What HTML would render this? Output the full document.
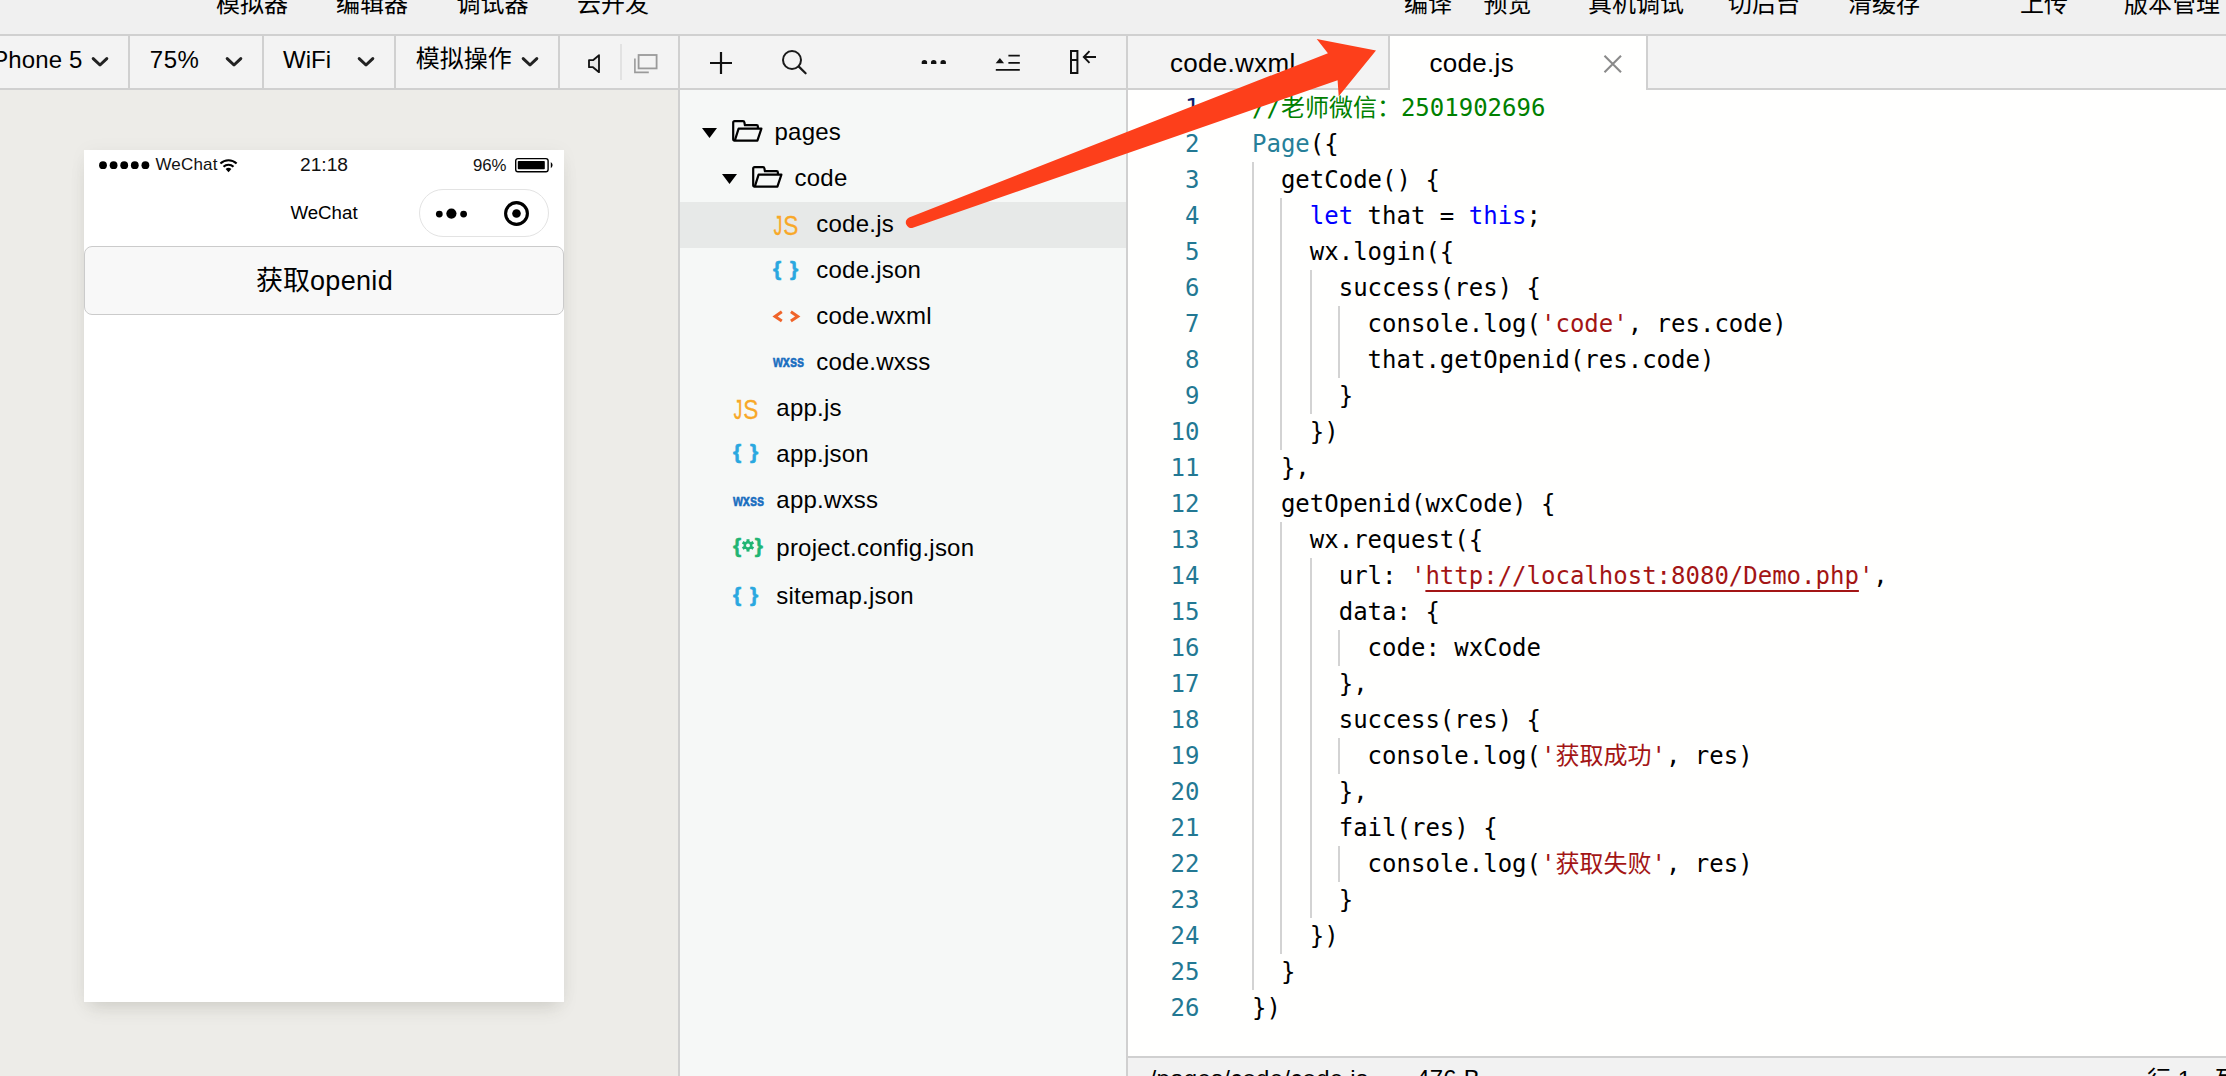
<!DOCTYPE html>
<html lang="zh-CN">
<head>
<meta charset="utf-8">
<title>code.js</title>
<style>
html,body{margin:0;padding:0;}
body{width:2226px;height:1076px;overflow:hidden;position:relative;background:#f0f0f0;font-family:'Liberation Sans', 'Noto Sans CJK SC', sans-serif;}
.a{position:absolute;}
.t{position:absolute;white-space:pre;}
svg{position:absolute;overflow:visible;}
</style>
</head>
<body>

<div class="a" style="left:0;top:0;width:2226px;height:34px;background:#f0f0f0"></div>
<div class="a" style="left:0;top:34px;width:2226px;height:2px;background:#d0d0d0"></div>
<div class="a" style="left:0;top:36px;width:2226px;height:52px;background:#f3f3f3"></div>
<div class="a" style="left:0;top:88px;width:2226px;height:2px;background:#d0d0d0"></div>
<div class="a" style="left:0;top:90px;width:678px;height:986px;background:#edece8"></div>
<div class="a" style="left:680px;top:90px;width:446px;height:986px;background:#f6f8f7"></div>
<div class="a" style="left:1128px;top:90px;width:1098px;height:966px;background:#fffffe"></div>
<div class="a" style="left:1390px;top:36px;width:256px;height:54px;background:#fffffe"></div>
<div class="a" style="left:678px;top:36px;width:2px;height:1040px;background:#d0d0d0"></div>
<div class="a" style="left:1126px;top:36px;width:2px;height:1040px;background:#d0d0d0"></div>
<div class="a" style="left:1388px;top:36px;width:2px;height:54px;background:#d0d0d0"></div>
<div class="a" style="left:1646px;top:36px;width:2px;height:54px;background:#d0d0d0"></div>
<div class="a" style="left:128px;top:36px;width:2px;height:52px;background:#d0d0d0"></div>
<div class="a" style="left:262px;top:36px;width:2px;height:52px;background:#d0d0d0"></div>
<div class="a" style="left:394px;top:36px;width:2px;height:52px;background:#d0d0d0"></div>
<div class="a" style="left:558px;top:36px;width:2px;height:52px;background:#d0d0d0"></div>
<div class="a" style="left:620px;top:44px;width:2px;height:36px;background:#e2e2e2"></div>
<div class="a" style="left:1128px;top:1056px;width:1098px;height:2px;background:#d0d0d0"></div>
<div class="a" style="left:1128px;top:1058px;width:1098px;height:18px;background:#f2f2f2"></div>
<div class="t " style="top:-14.28px;font:24px/36px 'Liberation Sans', 'Noto Sans CJK SC', sans-serif;color:#000;height:36px;left:216px;">模拟器</div>
<div class="t " style="top:-14.28px;font:24px/36px 'Liberation Sans', 'Noto Sans CJK SC', sans-serif;color:#000;height:36px;left:336px;">编辑器</div>
<div class="t " style="top:-14.28px;font:24px/36px 'Liberation Sans', 'Noto Sans CJK SC', sans-serif;color:#000;height:36px;left:456.5px;">调试器</div>
<div class="t " style="top:-14.28px;font:24px/36px 'Liberation Sans', 'Noto Sans CJK SC', sans-serif;color:#000;height:36px;left:577px;">云开发</div>
<div class="t " style="top:-14.28px;font:24px/36px 'Liberation Sans', 'Noto Sans CJK SC', sans-serif;color:#000;height:36px;left:1404px;">编译</div>
<div class="t " style="top:-14.28px;font:24px/36px 'Liberation Sans', 'Noto Sans CJK SC', sans-serif;color:#000;height:36px;left:1483.5px;">预览</div>
<div class="t " style="top:-14.28px;font:24px/36px 'Liberation Sans', 'Noto Sans CJK SC', sans-serif;color:#000;height:36px;left:1588px;">真机调试</div>
<div class="t " style="top:-14.28px;font:24px/36px 'Liberation Sans', 'Noto Sans CJK SC', sans-serif;color:#000;height:36px;left:1728px;">切后台</div>
<div class="t " style="top:-14.28px;font:24px/36px 'Liberation Sans', 'Noto Sans CJK SC', sans-serif;color:#000;height:36px;left:1848px;">清缓存</div>
<div class="t " style="top:-14.28px;font:24px/36px 'Liberation Sans', 'Noto Sans CJK SC', sans-serif;color:#000;height:36px;left:2020px;">上传</div>
<div class="t " style="top:-14.28px;font:24px/36px 'Liberation Sans', 'Noto Sans CJK SC', sans-serif;color:#000;height:36px;left:2124px;">版本管理</div>
<div class="t " style="top:41.72px;font:24px/36px 'Liberation Sans', 'Noto Sans CJK SC', sans-serif;color:#000;height:36px;letter-spacing:0.1px;left:-13.2px;">iPhone 5</div>
<div class="t " style="top:41.72px;font:24px/36px 'Liberation Sans', 'Noto Sans CJK SC', sans-serif;color:#000;height:36px;letter-spacing:0.5px;left:149.8px;">75%</div>
<div class="t " style="top:41.72px;font:24px/36px 'Liberation Sans', 'Noto Sans CJK SC', sans-serif;color:#000;height:36px;left:283px;">WiFi</div>
<div class="t " style="top:40.72px;font:24px/36px 'Liberation Sans', 'Noto Sans CJK SC', sans-serif;color:#000;height:36px;left:415.7px;">模拟操作</div>
<svg style="left:90px;top:54.5px" width="20" height="14" viewBox="0 0 20 14"><path d="M3.2 3.6 L10 10 L16.8 3.6" fill="none" stroke="#222" stroke-width="3" stroke-linecap="round" stroke-linejoin="round"/></svg>
<svg style="left:224px;top:54.5px" width="20" height="14" viewBox="0 0 20 14"><path d="M3.2 3.6 L10 10 L16.8 3.6" fill="none" stroke="#222" stroke-width="3" stroke-linecap="round" stroke-linejoin="round"/></svg>
<svg style="left:356px;top:54.5px" width="20" height="14" viewBox="0 0 20 14"><path d="M3.2 3.6 L10 10 L16.8 3.6" fill="none" stroke="#222" stroke-width="3" stroke-linecap="round" stroke-linejoin="round"/></svg>
<svg style="left:520px;top:54.5px" width="20" height="14" viewBox="0 0 20 14"><path d="M3.2 3.6 L10 10 L16.8 3.6" fill="none" stroke="#222" stroke-width="3" stroke-linecap="round" stroke-linejoin="round"/></svg>
<svg style="left:586px;top:52px" width="18" height="24" viewBox="0 0 18 24"><path d="M3 8.2 H7 L13 3.2 V20.2 L7 15.2 H3 Z" fill="#e9e9e9" stroke="#111" stroke-width="1.8" stroke-linejoin="round"/></svg>
<svg style="left:632px;top:52px" width="28" height="24" viewBox="0 0 28 24"><rect x="6.6" y="3" width="18" height="13.4" fill="none" stroke="#9a9a9a" stroke-width="1.8"/><path d="M2.9 6.5 V20.4 H16.8" fill="none" stroke="#9a9a9a" stroke-width="1.6"/></svg>
<svg style="left:708px;top:50px" width="26" height="26" viewBox="0 0 26 26"><path d="M13 2 V24 M2 13 H24" stroke="#111" stroke-width="2.2" fill="none"/></svg>
<svg style="left:780px;top:48px" width="30" height="30" viewBox="0 0 30 30"><circle cx="12" cy="12" r="9" fill="none" stroke="#1a1a1a" stroke-width="2"/><path d="M18.6 18.4 L25.6 25.3" stroke="#1a1a1a" stroke-width="2.2" fill="none" stroke-linecap="round"/></svg>
<svg style="left:920px;top:56px;overflow:hidden" width="28" height="8" viewBox="0 0 28 8"><circle cx="4.4" cy="6.7" r="2.75" fill="#111"/><circle cx="13.7" cy="6.7" r="2.75" fill="#111"/><circle cx="23.2" cy="6.7" r="2.75" fill="#111"/></svg>
<svg style="left:994px;top:52px" width="28" height="24" viewBox="0 0 28 24"><path d="M1.7 11.3 L5.9 5.9 L10.1 11.3 Z" fill="#111"/><path d="M14.4 3.6 H25.8 M14.4 10.85 H25.8 M1.8 17.9 H25.8" stroke="#111" stroke-width="1.9" fill="none"/></svg>
<svg style="left:1068px;top:48px" width="32" height="28" viewBox="0 0 32 28"><rect x="3" y="3" width="6.4" height="22" fill="none" stroke="#111" stroke-width="2"/><path d="M3 12 H9.4" stroke="#111" stroke-width="2"/><path d="M16 9 H28 M21.5 3.2 L15.8 9 L21.5 14.8" fill="none" stroke="#111" stroke-width="1.9"/></svg>
<div class="t " style="top:43.53px;font:26px/39px 'Liberation Sans', 'Noto Sans CJK SC', sans-serif;color:#000;height:39px;letter-spacing:0.3px;left:1170px;">code.wxml</div>
<div class="t " style="top:43.53px;font:26px/39px 'Liberation Sans', 'Noto Sans CJK SC', sans-serif;color:#000;height:39px;letter-spacing:0.3px;left:1429.5px;">code.js</div>
<svg style="left:1603px;top:54px" width="20" height="20" viewBox="0 0 20 20"><path d="M1.5 1.8 L18 18.2 M18 1.8 L1.5 18.2" stroke="#8a8a8a" stroke-width="2.1" fill="none"/></svg>
<div class="a" style="left:84px;top:150px;width:480px;height:852px;background:#fff;box-shadow:0 10px 18px -6px rgba(60,60,40,0.17),0 0 18px rgba(60,60,40,0.035)"></div>
<svg style="left:99.2px;top:160.5px" width="52" height="9" viewBox="0 0 52 9"><circle cx="4.0" cy="4.2" r="3.9" fill="#000"/><circle cx="14.6" cy="4.2" r="3.9" fill="#000"/><circle cx="25.2" cy="4.2" r="3.9" fill="#000"/><circle cx="35.8" cy="4.2" r="3.9" fill="#000"/><circle cx="46.4" cy="4.2" r="3.9" fill="#000"/></svg>
<div class="t " style="top:152.15px;font:17px/26px 'Liberation Sans', 'Noto Sans CJK SC', sans-serif;color:#111;height:26px;letter-spacing:0.2px;left:155.4px;">WeChat</div>
<svg style="left:219px;top:158px" width="19" height="15" viewBox="0 0 19 15"><path d="M1.4 5.6 A11.5 11.5 0 0 1 17.6 5.6" fill="none" stroke="#000" stroke-width="2.1" stroke-linecap="butt"/><path d="M4.5 8.8 A7.1 7.1 0 0 1 14.5 8.8" fill="none" stroke="#000" stroke-width="2.1"/><path d="M9.5 14.2 L6.6 11.1 A4.1 4.1 0 0 1 12.4 11.1 Z" fill="#000"/></svg>
<div class="t " style="top:149.89px;font:19.2px/29px 'Liberation Sans', 'Noto Sans CJK SC', sans-serif;color:#111;height:29px;left:-176px;width:1000px;text-align:center;">21:18</div>
<div class="t " style="top:152.72px;font:16.8px/25px 'Liberation Sans', 'Noto Sans CJK SC', sans-serif;color:#111;height:25px;left:-493.5px;width:1000px;text-align:right;">96%</div>
<svg style="left:514px;top:157px" width="42" height="17" viewBox="0 0 42 17"><rect x="1.7" y="1.6" width="32.4" height="13.2" rx="2.2" fill="none" stroke="#000" stroke-width="1.4"/><rect x="3.8" y="3.9" width="27" height="8.4" rx="0.8" fill="#000"/><path d="M36.8 5.1 Q40.4 8.2 36.8 11.3 Z" fill="#000"/></svg>
<div class="t " style="top:198.56px;font:18.7px/28px 'Liberation Sans', 'Noto Sans CJK SC', sans-serif;color:#000;height:28px;left:-176px;width:1000px;text-align:center;">WeChat</div>
<div class="a" style="left:419px;top:189px;width:129.6px;height:47.6px;box-sizing:border-box;border:1.5px solid #e3e3e3;border-radius:24px;background:#fff"></div>
<svg style="left:430px;top:200px" width="110" height="28" viewBox="0 0 110 28"><circle cx="9.3" cy="14.1" r="3.4" fill="#000"/><circle cx="21.4" cy="13.6" r="5.1" fill="#000"/><circle cx="33.6" cy="14.1" r="3.4" fill="#000"/><circle cx="86.5" cy="13.5" r="10.9" fill="none" stroke="#000" stroke-width="3.1"/><circle cx="86.5" cy="13.5" r="4.3" fill="#000"/></svg>
<div class="a" style="left:84px;top:246px;width:480px;height:69px;box-sizing:border-box;border:1.5px solid #cbcbcb;border-radius:8px;background:#f8f8f8"></div>
<div class="t " style="top:260.68px;font:27px/40px 'Liberation Sans', 'Noto Sans CJK SC', sans-serif;color:#000;height:40px;left:-175.5px;width:1000px;text-align:center;">获取<span style="letter-spacing:0.35px">openid</span></div>
<div class="a" style="left:680px;top:202px;width:446px;height:46px;background:#e7e9e8"></div>
<svg style="left:702.2px;top:127.8px" width="15" height="10" viewBox="0 0 15 10"><path d="M0 0 H15 L7.5 10 Z" fill="#000"/></svg>
<svg style="left:731.8px;top:119.6px" width="31" height="23" viewBox="0 0 31 23"><path d="M2.6 20.6 Q1.2 20.6 1.2 19.2 V2.6 Q1.2 1.2 2.6 1.2 H11 Q12.2 1.2 12.4 2.4 L12.9 5.2 H24.6 Q25.9 5.2 25.9 6.5 V8.4" fill="none" stroke="#000" stroke-width="2.2" stroke-linejoin="round"/><path d="M6.6 8.6 H29.4 L25.4 20.6 H2.8 Z" fill="none" stroke="#000" stroke-width="2.2" stroke-linejoin="round"/></svg>
<svg style="left:722.2px;top:173.8px" width="15" height="10" viewBox="0 0 15 10"><path d="M0 0 H15 L7.5 10 Z" fill="#000"/></svg>
<svg style="left:751.8px;top:165.6px" width="31" height="23" viewBox="0 0 31 23"><path d="M2.6 20.6 Q1.2 20.6 1.2 19.2 V2.6 Q1.2 1.2 2.6 1.2 H11 Q12.2 1.2 12.4 2.4 L12.9 5.2 H24.6 Q25.9 5.2 25.9 6.5 V8.4" fill="none" stroke="#000" stroke-width="2.2" stroke-linejoin="round"/><path d="M6.6 8.6 H29.4 L25.4 20.6 H2.8 Z" fill="none" stroke="#000" stroke-width="2.2" stroke-linejoin="round"/></svg>
<div class="t " style="top:113.72px;font:24px/36px 'Liberation Sans', 'Noto Sans CJK SC', sans-serif;color:#000;height:36px;letter-spacing:0.24px;left:774.5px;">pages</div>
<div class="t " style="top:159.72px;font:24px/36px 'Liberation Sans', 'Noto Sans CJK SC', sans-serif;color:#000;height:36px;letter-spacing:0.24px;left:794.5px;">code</div>
<div class="t " style="top:205.72px;font:24px/36px 'Liberation Sans', 'Noto Sans CJK SC', sans-serif;color:#000;height:36px;letter-spacing:0.24px;left:816.3px;">code.js</div>
<svg style="left:773px;top:209.4px" width="28" height="34" viewBox="0 0 28 34"><text x="0" y="26.5" transform="translate(0.7 0) scale(0.6 1)" font-family="'Liberation Sans', 'Noto Sans CJK SC', sans-serif" font-size="28.3" fill="#f8a828" stroke="#f8a828" stroke-width="0.5">J</text><text x="0" y="26.5" transform="translate(10.3 0) scale(0.8 1)" font-family="'Liberation Sans', 'Noto Sans CJK SC', sans-serif" font-size="28.3" fill="#f8a828" stroke="#f8a828" stroke-width="0.3">S</text></svg>
<div class="t " style="top:251.72px;font:24px/36px 'Liberation Sans', 'Noto Sans CJK SC', sans-serif;color:#000;height:36px;letter-spacing:0.24px;left:816.3px;">code.json</div>
<svg style="left:772.6px;top:255.5px" width="30" height="30" viewBox="0 0 30 30"><text x="0" y="20.4" font-family="'Liberation Sans', 'Noto Sans CJK SC', sans-serif" font-weight="bold" font-size="21" fill="#29a8e0" stroke="#29a8e0" stroke-width="0.6">{</text><text x="17" y="20.4" font-family="'Liberation Sans', 'Noto Sans CJK SC', sans-serif" font-weight="bold" font-size="21" fill="#29a8e0" stroke="#29a8e0" stroke-width="0.6">}</text></svg>
<div class="t " style="top:297.72px;font:24px/36px 'Liberation Sans', 'Noto Sans CJK SC', sans-serif;color:#000;height:36px;letter-spacing:0.24px;left:816.3px;">code.wxml</div>
<svg style="left:770.6px;top:301.5px" width="32" height="30" viewBox="0 0 32 30"><path d="M10.8 9.7 L4.05 14.4 L10.8 19.1 M19.9 9.7 L26.75 14.4 L19.9 19.1" fill="none" stroke="#f0642a" stroke-width="3"/></svg>
<div class="t " style="top:343.72px;font:24px/36px 'Liberation Sans', 'Noto Sans CJK SC', sans-serif;color:#000;height:36px;letter-spacing:0.24px;left:816.3px;">code.wxss</div>
<svg style="left:772px;top:347.4px" width="36" height="30" viewBox="0 0 36 30"><text x="0" y="20.1" transform="translate(0.9 0) scale(0.8 1)" font-family="'Liberation Sans', 'Noto Sans CJK SC', sans-serif" font-weight="bold" font-size="16" fill="#1a6ec0" stroke="#1a6ec0" stroke-width="0.5">wxss</text></svg>
<div class="t " style="top:389.72px;font:24px/36px 'Liberation Sans', 'Noto Sans CJK SC', sans-serif;color:#000;height:36px;letter-spacing:0.24px;left:776.3px;">app.js</div>
<svg style="left:733px;top:393.4px" width="28" height="34" viewBox="0 0 28 34"><text x="0" y="26.5" transform="translate(0.7 0) scale(0.6 1)" font-family="'Liberation Sans', 'Noto Sans CJK SC', sans-serif" font-size="28.3" fill="#f8a828" stroke="#f8a828" stroke-width="0.5">J</text><text x="0" y="26.5" transform="translate(10.3 0) scale(0.8 1)" font-family="'Liberation Sans', 'Noto Sans CJK SC', sans-serif" font-size="28.3" fill="#f8a828" stroke="#f8a828" stroke-width="0.3">S</text></svg>
<div class="t " style="top:435.72px;font:24px/36px 'Liberation Sans', 'Noto Sans CJK SC', sans-serif;color:#000;height:36px;letter-spacing:0.24px;left:776.3px;">app.json</div>
<svg style="left:732.6px;top:439.4px" width="30" height="30" viewBox="0 0 30 30"><text x="0" y="20.4" font-family="'Liberation Sans', 'Noto Sans CJK SC', sans-serif" font-weight="bold" font-size="21" fill="#29a8e0" stroke="#29a8e0" stroke-width="0.6">{</text><text x="17" y="20.4" font-family="'Liberation Sans', 'Noto Sans CJK SC', sans-serif" font-weight="bold" font-size="21" fill="#29a8e0" stroke="#29a8e0" stroke-width="0.6">}</text></svg>
<div class="t " style="top:481.72px;font:24px/36px 'Liberation Sans', 'Noto Sans CJK SC', sans-serif;color:#000;height:36px;letter-spacing:0.24px;left:776.3px;">app.wxss</div>
<svg style="left:732px;top:485.5px" width="36" height="30" viewBox="0 0 36 30"><text x="0" y="20.1" transform="translate(0.9 0) scale(0.8 1)" font-family="'Liberation Sans', 'Noto Sans CJK SC', sans-serif" font-weight="bold" font-size="16" fill="#1a6ec0" stroke="#1a6ec0" stroke-width="0.5">wxss</text></svg>
<div class="t " style="top:529.72px;font:24px/36px 'Liberation Sans', 'Noto Sans CJK SC', sans-serif;color:#000;height:36px;letter-spacing:0.24px;left:776.3px;">project.config.json</div>
<svg style="left:732.6px;top:533.3px" width="32" height="30" viewBox="0 0 32 30"><text x="0" y="20.4" font-family="'Liberation Sans', 'Noto Sans CJK SC', sans-serif" font-weight="bold" font-size="21" fill="#21b573" stroke="#21b573" stroke-width="0.5">{</text><text x="21.8" y="20.4" font-family="'Liberation Sans', 'Noto Sans CJK SC', sans-serif" font-weight="bold" font-size="21" fill="#21b573" stroke="#21b573" stroke-width="0.5">}</text><rect x="-1.5" y="-6.2" width="3" height="12.4" fill="#21b573" transform="translate(15 12.4) rotate(0)"/><rect x="-1.5" y="-6.2" width="3" height="12.4" fill="#21b573" transform="translate(15 12.4) rotate(60)"/><rect x="-1.5" y="-6.2" width="3" height="12.4" fill="#21b573" transform="translate(15 12.4) rotate(120)"/><circle cx="15" cy="12.4" r="4.4" fill="#21b573"/><circle cx="15" cy="12.4" r="1.9" fill="#f6f8f7"/></svg>
<div class="t " style="top:577.72px;font:24px/36px 'Liberation Sans', 'Noto Sans CJK SC', sans-serif;color:#000;height:36px;letter-spacing:0.24px;left:776.3px;">sitemap.json</div>
<svg style="left:732.6px;top:581.6px" width="30" height="30" viewBox="0 0 30 30"><text x="0" y="20.4" font-family="'Liberation Sans', 'Noto Sans CJK SC', sans-serif" font-weight="bold" font-size="21" fill="#29a8e0" stroke="#29a8e0" stroke-width="0.6">{</text><text x="17" y="20.4" font-family="'Liberation Sans', 'Noto Sans CJK SC', sans-serif" font-weight="bold" font-size="21" fill="#29a8e0" stroke="#29a8e0" stroke-width="0.6">}</text></svg>
<div class="a" id="ed" style="left:1128px;top:90px;width:1098px;height:966px;overflow:hidden;font:24px/36px 'DejaVu Sans Mono', 'Liberation Mono', 'Noto Sans CJK SC', monospace;">
<div class="t" style="left:0;top:0px;width:71.5px;height:36px;text-align:right;color:#0b216f">1</div>
<div class="t" style="left:124.00px;top:0px;height:36px;color:#000"><span style="color:#008000">//老师微信：2501902696</span></div>
<div class="t" style="left:0;top:36px;width:71.5px;height:36px;text-align:right;color:#237893">2</div>
<div class="t" style="left:124.00px;top:36px;height:36px;color:#000"><span style="color:#267f99">Page</span>({</div>
<div class="t" style="left:0;top:72px;width:71.5px;height:36px;text-align:right;color:#237893">3</div>
<div class="a" style="left:124px;top:72px;width:2px;height:36px;background:#d3d3d3"></div>
<div class="t" style="left:152.90px;top:72px;height:36px;color:#000">getCode() {</div>
<div class="t" style="left:0;top:108px;width:71.5px;height:36px;text-align:right;color:#237893">4</div>
<div class="a" style="left:124px;top:108px;width:2px;height:36px;background:#d3d3d3"></div>
<div class="a" style="left:152px;top:108px;width:2px;height:36px;background:#d3d3d3"></div>
<div class="t" style="left:181.80px;top:108px;height:36px;color:#000"><span style="color:#0000ff">let</span> that = <span style="color:#0000ff">this</span>;</div>
<div class="t" style="left:0;top:144px;width:71.5px;height:36px;text-align:right;color:#237893">5</div>
<div class="a" style="left:124px;top:144px;width:2px;height:36px;background:#d3d3d3"></div>
<div class="a" style="left:152px;top:144px;width:2px;height:36px;background:#d3d3d3"></div>
<div class="t" style="left:181.80px;top:144px;height:36px;color:#000">wx.login({</div>
<div class="t" style="left:0;top:180px;width:71.5px;height:36px;text-align:right;color:#237893">6</div>
<div class="a" style="left:124px;top:180px;width:2px;height:36px;background:#d3d3d3"></div>
<div class="a" style="left:152px;top:180px;width:2px;height:36px;background:#d3d3d3"></div>
<div class="a" style="left:182px;top:180px;width:2px;height:36px;background:#d3d3d3"></div>
<div class="t" style="left:210.70px;top:180px;height:36px;color:#000">success(res) {</div>
<div class="t" style="left:0;top:216px;width:71.5px;height:36px;text-align:right;color:#237893">7</div>
<div class="a" style="left:124px;top:216px;width:2px;height:36px;background:#d3d3d3"></div>
<div class="a" style="left:152px;top:216px;width:2px;height:36px;background:#d3d3d3"></div>
<div class="a" style="left:182px;top:216px;width:2px;height:36px;background:#d3d3d3"></div>
<div class="a" style="left:210px;top:216px;width:2px;height:36px;background:#d3d3d3"></div>
<div class="t" style="left:239.60px;top:216px;height:36px;color:#000">console.log(<span style="color:#a31515">'code'</span>, res.code)</div>
<div class="t" style="left:0;top:252px;width:71.5px;height:36px;text-align:right;color:#237893">8</div>
<div class="a" style="left:124px;top:252px;width:2px;height:36px;background:#d3d3d3"></div>
<div class="a" style="left:152px;top:252px;width:2px;height:36px;background:#d3d3d3"></div>
<div class="a" style="left:182px;top:252px;width:2px;height:36px;background:#d3d3d3"></div>
<div class="a" style="left:210px;top:252px;width:2px;height:36px;background:#d3d3d3"></div>
<div class="t" style="left:239.60px;top:252px;height:36px;color:#000">that.getOpenid(res.code)</div>
<div class="t" style="left:0;top:288px;width:71.5px;height:36px;text-align:right;color:#237893">9</div>
<div class="a" style="left:124px;top:288px;width:2px;height:36px;background:#d3d3d3"></div>
<div class="a" style="left:152px;top:288px;width:2px;height:36px;background:#d3d3d3"></div>
<div class="a" style="left:182px;top:288px;width:2px;height:36px;background:#d3d3d3"></div>
<div class="t" style="left:210.70px;top:288px;height:36px;color:#000">}</div>
<div class="t" style="left:0;top:324px;width:71.5px;height:36px;text-align:right;color:#237893">10</div>
<div class="a" style="left:124px;top:324px;width:2px;height:36px;background:#d3d3d3"></div>
<div class="a" style="left:152px;top:324px;width:2px;height:36px;background:#d3d3d3"></div>
<div class="t" style="left:181.80px;top:324px;height:36px;color:#000">})</div>
<div class="t" style="left:0;top:360px;width:71.5px;height:36px;text-align:right;color:#237893">11</div>
<div class="a" style="left:124px;top:360px;width:2px;height:36px;background:#d3d3d3"></div>
<div class="t" style="left:152.90px;top:360px;height:36px;color:#000">},</div>
<div class="t" style="left:0;top:396px;width:71.5px;height:36px;text-align:right;color:#237893">12</div>
<div class="a" style="left:124px;top:396px;width:2px;height:36px;background:#d3d3d3"></div>
<div class="t" style="left:152.90px;top:396px;height:36px;color:#000">getOpenid(wxCode) {</div>
<div class="t" style="left:0;top:432px;width:71.5px;height:36px;text-align:right;color:#237893">13</div>
<div class="a" style="left:124px;top:432px;width:2px;height:36px;background:#d3d3d3"></div>
<div class="a" style="left:152px;top:432px;width:2px;height:36px;background:#d3d3d3"></div>
<div class="t" style="left:181.80px;top:432px;height:36px;color:#000">wx.request({</div>
<div class="t" style="left:0;top:468px;width:71.5px;height:36px;text-align:right;color:#237893">14</div>
<div class="a" style="left:124px;top:468px;width:2px;height:36px;background:#d3d3d3"></div>
<div class="a" style="left:152px;top:468px;width:2px;height:36px;background:#d3d3d3"></div>
<div class="a" style="left:182px;top:468px;width:2px;height:36px;background:#d3d3d3"></div>
<div class="t" style="left:210.70px;top:468px;height:36px;color:#000">url: <span style="color:#a31515">'</span><span style="color:#a31515;text-decoration:underline;text-decoration-thickness:2px;text-underline-offset:5.5px;text-decoration-skip-ink:none">http://localhost:8080/Demo.php</span><span style="color:#a31515">'</span>,</div>
<div class="t" style="left:0;top:504px;width:71.5px;height:36px;text-align:right;color:#237893">15</div>
<div class="a" style="left:124px;top:504px;width:2px;height:36px;background:#d3d3d3"></div>
<div class="a" style="left:152px;top:504px;width:2px;height:36px;background:#d3d3d3"></div>
<div class="a" style="left:182px;top:504px;width:2px;height:36px;background:#d3d3d3"></div>
<div class="t" style="left:210.70px;top:504px;height:36px;color:#000">data: {</div>
<div class="t" style="left:0;top:540px;width:71.5px;height:36px;text-align:right;color:#237893">16</div>
<div class="a" style="left:124px;top:540px;width:2px;height:36px;background:#d3d3d3"></div>
<div class="a" style="left:152px;top:540px;width:2px;height:36px;background:#d3d3d3"></div>
<div class="a" style="left:182px;top:540px;width:2px;height:36px;background:#d3d3d3"></div>
<div class="a" style="left:210px;top:540px;width:2px;height:36px;background:#d3d3d3"></div>
<div class="t" style="left:239.60px;top:540px;height:36px;color:#000">code: wxCode</div>
<div class="t" style="left:0;top:576px;width:71.5px;height:36px;text-align:right;color:#237893">17</div>
<div class="a" style="left:124px;top:576px;width:2px;height:36px;background:#d3d3d3"></div>
<div class="a" style="left:152px;top:576px;width:2px;height:36px;background:#d3d3d3"></div>
<div class="a" style="left:182px;top:576px;width:2px;height:36px;background:#d3d3d3"></div>
<div class="t" style="left:210.70px;top:576px;height:36px;color:#000">},</div>
<div class="t" style="left:0;top:612px;width:71.5px;height:36px;text-align:right;color:#237893">18</div>
<div class="a" style="left:124px;top:612px;width:2px;height:36px;background:#d3d3d3"></div>
<div class="a" style="left:152px;top:612px;width:2px;height:36px;background:#d3d3d3"></div>
<div class="a" style="left:182px;top:612px;width:2px;height:36px;background:#d3d3d3"></div>
<div class="t" style="left:210.70px;top:612px;height:36px;color:#000">success(res) {</div>
<div class="t" style="left:0;top:648px;width:71.5px;height:36px;text-align:right;color:#237893">19</div>
<div class="a" style="left:124px;top:648px;width:2px;height:36px;background:#d3d3d3"></div>
<div class="a" style="left:152px;top:648px;width:2px;height:36px;background:#d3d3d3"></div>
<div class="a" style="left:182px;top:648px;width:2px;height:36px;background:#d3d3d3"></div>
<div class="a" style="left:210px;top:648px;width:2px;height:36px;background:#d3d3d3"></div>
<div class="t" style="left:239.60px;top:648px;height:36px;color:#000">console.log(<span style="color:#a31515">'获取成功'</span>, res)</div>
<div class="t" style="left:0;top:684px;width:71.5px;height:36px;text-align:right;color:#237893">20</div>
<div class="a" style="left:124px;top:684px;width:2px;height:36px;background:#d3d3d3"></div>
<div class="a" style="left:152px;top:684px;width:2px;height:36px;background:#d3d3d3"></div>
<div class="a" style="left:182px;top:684px;width:2px;height:36px;background:#d3d3d3"></div>
<div class="t" style="left:210.70px;top:684px;height:36px;color:#000">},</div>
<div class="t" style="left:0;top:720px;width:71.5px;height:36px;text-align:right;color:#237893">21</div>
<div class="a" style="left:124px;top:720px;width:2px;height:36px;background:#d3d3d3"></div>
<div class="a" style="left:152px;top:720px;width:2px;height:36px;background:#d3d3d3"></div>
<div class="a" style="left:182px;top:720px;width:2px;height:36px;background:#d3d3d3"></div>
<div class="t" style="left:210.70px;top:720px;height:36px;color:#000">fail(res) {</div>
<div class="t" style="left:0;top:756px;width:71.5px;height:36px;text-align:right;color:#237893">22</div>
<div class="a" style="left:124px;top:756px;width:2px;height:36px;background:#d3d3d3"></div>
<div class="a" style="left:152px;top:756px;width:2px;height:36px;background:#d3d3d3"></div>
<div class="a" style="left:182px;top:756px;width:2px;height:36px;background:#d3d3d3"></div>
<div class="a" style="left:210px;top:756px;width:2px;height:36px;background:#d3d3d3"></div>
<div class="t" style="left:239.60px;top:756px;height:36px;color:#000">console.log(<span style="color:#a31515">'获取失败'</span>, res)</div>
<div class="t" style="left:0;top:792px;width:71.5px;height:36px;text-align:right;color:#237893">23</div>
<div class="a" style="left:124px;top:792px;width:2px;height:36px;background:#d3d3d3"></div>
<div class="a" style="left:152px;top:792px;width:2px;height:36px;background:#d3d3d3"></div>
<div class="a" style="left:182px;top:792px;width:2px;height:36px;background:#d3d3d3"></div>
<div class="t" style="left:210.70px;top:792px;height:36px;color:#000">}</div>
<div class="t" style="left:0;top:828px;width:71.5px;height:36px;text-align:right;color:#237893">24</div>
<div class="a" style="left:124px;top:828px;width:2px;height:36px;background:#d3d3d3"></div>
<div class="a" style="left:152px;top:828px;width:2px;height:36px;background:#d3d3d3"></div>
<div class="t" style="left:181.80px;top:828px;height:36px;color:#000">})</div>
<div class="t" style="left:0;top:864px;width:71.5px;height:36px;text-align:right;color:#237893">25</div>
<div class="a" style="left:124px;top:864px;width:2px;height:36px;background:#d3d3d3"></div>
<div class="t" style="left:152.90px;top:864px;height:36px;color:#000">}</div>
<div class="t" style="left:0;top:900px;width:71.5px;height:36px;text-align:right;color:#237893">26</div>
<div class="t" style="left:124.00px;top:900px;height:36px;color:#000">})</div>
</div>
<div class="a" style="left:1128px;top:1058px;width:1098px;height:18px;overflow:hidden">
<div class="t " style="top:2.72px;font:24px/36px 'Liberation Sans', 'Noto Sans CJK SC', sans-serif;color:#000;height:36px;letter-spacing:0.27px;left:21.59999999999991px;">/pages/code/code.js</div>
<div class="t " style="top:2.72px;font:24px/36px 'Liberation Sans', 'Noto Sans CJK SC', sans-serif;color:#000;height:36px;letter-spacing:0.2px;left:288.20000000000005px;">476 B</div>
<div class="t " style="top:3.72px;font:24px/36px 'Liberation Sans', 'Noto Sans CJK SC', sans-serif;color:#000;height:36px;left:1019px;">行 1，列 1</div>
</div>
<svg style="left:0;top:0" width="2226" height="1076" viewBox="0 0 2226 1076"><path d="M909.1 217.4 L1327.9 53.2 L1316.7 38.9 L1376 50.5 L1338.7 96.2 L1337.6 80.3 L912.9 227.8 A5.55 5.55 0 0 1 909.1 217.4 Z" fill="#fd3f1b"/></svg>
</body>
</html>
